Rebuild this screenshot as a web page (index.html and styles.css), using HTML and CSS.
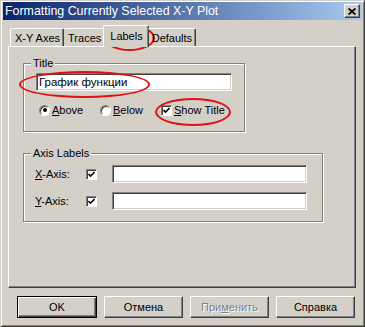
FILE: index.html
```html
<!DOCTYPE html>
<html>
<head>
<meta charset="utf-8">
<link rel="stylesheet" href="styles.css">
</head>
<body>
<div class="dialog">
  <div class="titlebar">
    <span class="title-text">Formatting Currently Selected X-Y Plot</span>
    <span class="close-btn"><svg width="8" height="7" viewBox="0 0 8 7"><path d="M0.5 0.5 L7.5 6.5 M7.5 0.5 L0.5 6.5" stroke="#000" stroke-width="1.8" fill="none"/></svg></span>
  </div>
  <div class="tabs">
    <span class="tab tab-first">X-Y Axes</span>
    <span class="tab">Traces</span>
    <span class="tab tab-active">Labels</span>
    <span class="tab">Defaults</span>
  </div>
  <div class="panel">
    <div class="group group-title">
      <span class="group-label">Title</span>
      <div class="field field-title">График функции</div>
      <div class="options">
        <span class="opt"><span class="radio radio-on"><span class="dot"></span></span><span><u>A</u>bove</span></span>
        <span class="opt"><span class="radio"></span><span><u>B</u>elow</span></span>
        <span class="opt opt-last"><span class="check"><svg width="7" height="7" viewBox="0 0 7 7"><path d="M0.5 3 L2.5 5.2 L6.5 1" stroke="#000" stroke-width="1.6" fill="none"/></svg></span><span><u>S</u>how Title</span></span>
      </div>
    </div>
    <div class="group group-axis">
      <span class="group-label">Axis Labels</span>
      <div class="axis-row">
        <span class="axis-label"><u>X</u>-Axis:</span>
        <span class="check"><svg width="7" height="7" viewBox="0 0 7 7"><path d="M0.5 3 L2.5 5.2 L6.5 1" stroke="#000" stroke-width="1.6" fill="none"/></svg></span>
        <div class="field field-axis"></div>
      </div>
      <div class="axis-row">
        <span class="axis-label"><u>Y</u>-Axis:</span>
        <span class="check"><svg width="7" height="7" viewBox="0 0 7 7"><path d="M0.5 3 L2.5 5.2 L6.5 1" stroke="#000" stroke-width="1.6" fill="none"/></svg></span>
        <div class="field field-axis"></div>
      </div>
    </div>
  </div>
  <div class="buttons">
    <span class="btn btn-default">OK</span>
    <span class="btn">Отмена</span>
    <span class="btn btn-disabled">При<u>м</u>енить</span>
    <span class="btn">Справка</span>
  </div>
  <div class="mark mark-tab"></div>
  <div class="mark mark-field"></div>
  <div class="mark mark-show"></div>
</div>
</body>
</html>
```

FILE: styles.css
```css
html, body {
  margin: 0;
  padding: 0;
  background: #d4d0c8;
}
body {
  font-family: "Liberation Sans", Arial, sans-serif;
  font-size: 11px;
  color: #000;
}
.dialog {
  position: relative;
  width: 365px;
  height: 327px;
  box-sizing: border-box;
  background: #d4d0c8;
  border: 1px solid;
  border-color: #d4d0c8 #404040 #404040 #d4d0c8;
  box-shadow: inset 1px 1px #fff, inset -1px -1px #808080;
  padding: 1px 2px 2px 2px;
}
.titlebar {
  height: 18px;
  display: flex;
  align-items: center;
  justify-content: space-between;
  background: linear-gradient(to right, #0a246a, #a6caf0);
  padding: 0 2px 0 2px;
}
.title-text {
  color: #fff;
  font-size: 12.4px;
  white-space: nowrap;
}
.close-btn {
  width: 16px;
  height: 14px;
  box-sizing: border-box;
  background: #d4d0c8;
  border: 1px solid;
  border-color: #fff #404040 #404040 #fff;
  box-shadow: inset -1px -1px #808080;
  display: flex;
  align-items: center;
  justify-content: center;
}
.tabs {
  display: flex;
  align-items: flex-end;
  height: 21px;
  margin-top: 5px;
  padding-left: 7px;
  position: relative;
  z-index: 1;
}
.tab {
  height: 18px;
  box-sizing: border-box;
  padding: 2px 3px 0 4px;
  border-top: 1px solid #fff;
  border-right: 1px solid #404040;
  border-radius: 2px 2px 0 0;
  line-height: 14px;
  white-space: nowrap;
  box-shadow: inset -1px 0 #808080;
}
.tab-first {
  border-left: 1px solid #fff;
}
.tab-active {
  height: 22px;
  margin-bottom: -1px;
  background: #d4d0c8;
  border-left: 1px solid #fff;
  padding: 3px 5px 0 6px;
  margin-left: -2px;
  margin-right: -1px;
}
.panel {
  margin-left: 5px;
  width: 348px;
  height: 242px;
  box-sizing: border-box;
  border: 1px solid;
  border-color: #fff #404040 #404040 #fff;
  box-shadow: inset -1px -1px #808080;
  padding: 16px 0 0 14px;
}
.group {
  position: relative;
  box-sizing: border-box;
  border: 1px solid #808080;
  box-shadow: inset 1px 1px #fff, 1px 1px #fff;
}
.group-label {
  position: absolute;
  top: -8px;
  left: 7px;
  padding: 0 2px;
  background: #d4d0c8;
  line-height: 14px;
}
.group-title {
  width: 222px;
  height: 69px;
  padding: 9px 0 0 12px;
}
.field {
  box-sizing: border-box;
  height: 18px;
  background: #fff;
  border: 1px solid;
  border-color: #808080 #fff #fff #808080;
  box-shadow: inset 1px 1px #404040, inset -1px -1px #d4d0c8;
}
.field-title {
  width: 196px;
  padding: 1px 0 0 2px;
  font-size: 11.5px;
  line-height: 14px;
  white-space: nowrap;
}
.options {
  display: flex;
  align-items: center;
  margin-top: 12px;
  margin-left: 3px;
  height: 14px;
}
.opt {
  display: flex;
  align-items: center;
  gap: 2px;
  width: 61px;
  white-space: nowrap;
}
.opt-last {
  width: auto;
}
.radio {
  width: 11px;
  height: 11px;
  flex: none;
  box-sizing: border-box;
  border-radius: 50%;
  background: #fff;
  border: 1px solid;
  border-color: #808080 #fff #fff #808080;
  box-shadow: inset 1px 1px #404040;
  display: flex;
  align-items: center;
  justify-content: center;
}
.dot {
  width: 4px;
  height: 4px;
  border-radius: 50%;
  background: #000;
}
.check {
  width: 11px;
  height: 11px;
  flex: none;
  box-sizing: border-box;
  background: #fff;
  border: 1px solid;
  border-color: #808080 #fff #fff #808080;
  box-shadow: inset 1px 1px #404040;
  display: flex;
  align-items: center;
  justify-content: center;
}
.group-axis {
  width: 300px;
  height: 69px;
  margin-top: 21px;
  padding: 11px 0 0 11px;
  display: flex;
  flex-direction: column;
  gap: 9px;
}
.axis-row {
  display: flex;
  align-items: center;
  height: 18px;
}
.axis-label {
  width: 51px;
  white-space: nowrap;
}
.field-axis {
  width: 195px;
  margin-left: 15px;
}
.buttons {
  display: flex;
  gap: 7px;
  margin-top: 8px;
  padding-left: 14px;
}
.btn {
  width: 79px;
  height: 22px;
  box-sizing: border-box;
  display: flex;
  align-items: center;
  justify-content: center;
  border: 1px solid;
  border-color: #fff #404040 #404040 #fff;
  box-shadow: inset -1px -1px #808080;
  white-space: nowrap;
}
.btn-default {
  border: 1px solid #000;
  box-shadow: inset 1px 1px #fff, inset -1px -1px #404040, inset -2px -2px #808080;
  width: 80px;
}
.btn-disabled {
  color: #808080;
  text-shadow: 1px 1px #fff;
}
.mark {
  position: absolute;
  border: 2px solid #e01010;
  border-radius: 50%;
  box-sizing: border-box;
}
.mark-tab {
  left: 103px;
  top: 24px;
  width: 51px;
  height: 26px;
}
.mark-field {
  left: 18px;
  top: 70px;
  width: 131px;
  height: 27px;
}
.mark-show {
  left: 154px;
  top: 97px;
  width: 76px;
  height: 28px;
}
```
